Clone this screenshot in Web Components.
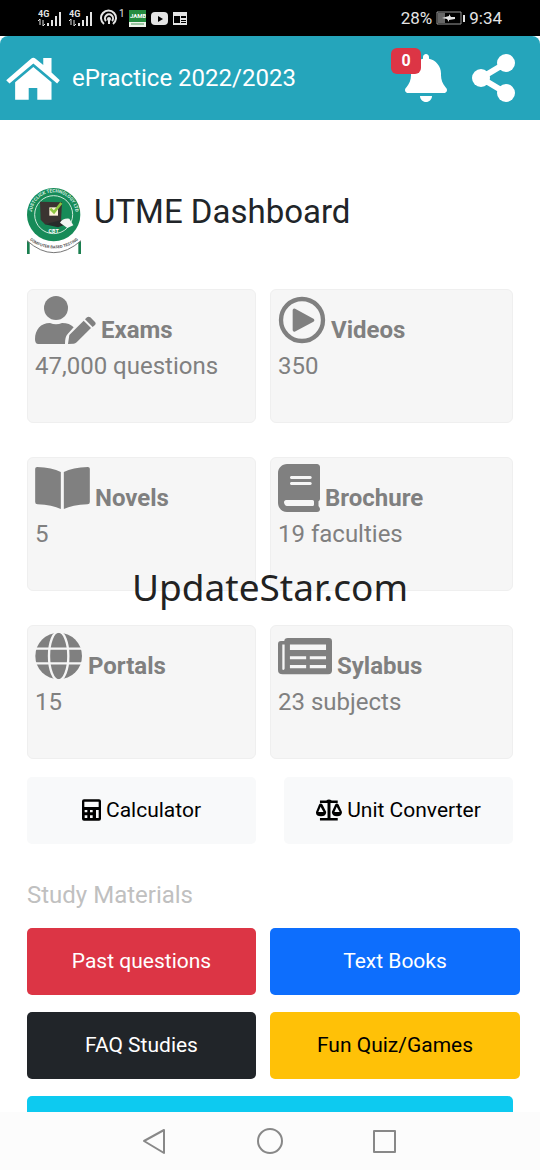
<!DOCTYPE html>
<html lang="en">
<head>
<meta charset="utf-8">
<meta name="viewport" content="width=device-width, initial-scale=1">
<title>UTME Dashboard</title>
<style>
  body {
    margin: 0;
    font-family: Roboto, "Liberation Sans", sans-serif;
    color: #212529;
    background: #fff;
  }
</style>
</head>
<body>
<practice-app></practice-app>

<script>
const icons = {
  home: /* html */`<svg viewBox="18 168 162 130" width="54" height="43"><path d="M18 238 93 173q7-5 14 0l23 19v-21h25v44l25 23-8 10-72-60-72 60zM45 244l55-46 55 46v53h-43v-35H86v35H45z"/></svg>`,
  bell: /* html */`<svg viewBox="0 0 448 512" width="42" height="48"><path d="M224 0c-17.700 0-32 14.300-32 32v19.200C119 66 64 130.600 64 208v18.800c0 47-17.300 92.400-48.500 127.600l-7.400 8.300c-8.400 9.400-10.400 22.900-5.300 34.400S19.400 416 32 416h384c12.600 0 24-7.400 29.200-18.900s3.100-25-5.300-34.400l-7.400-8.300C401.300 319.200 384 273.900 384 226.800V208c0-77.400-55-142-128-156.800V32c0-17.700-14.300-32-32-32zm45.300 493.300c12-12 18.700-28.300 18.700-45.300H160c0 17 6.700 33.300 18.700 45.300s28.300 18.700 45.300 18.700 33.300-6.700 45.300-18.700z"/></svg>`,
  share: /* html */`<svg viewBox="0 0 44 48" width="44" height="48"><path d="M34 9 9 24l25 15" fill="none" stroke="currentColor" stroke-width="6"/><circle cx="34" cy="9" r="9"/><circle cx="9" cy="24" r="9"/><circle cx="34" cy="39" r="9"/></svg>`,
  exams: /* html */`<svg viewBox="58 48 183 144" width="61" height="48"><circle cx="121" cy="84" r="36"/><path d="M58 178c0-29 17-49 45-49q18 8 36 0c16 0 27 4 35 13l-18 20c-6 6-8 16-8 30H68q-10 0-10-14zM157 192l4-27 43-43 22 22-43 43q-4 4-9 4zM208 118l6-6q5-4 10 0l14 14q4 4 0 9l-7 6z"/></svg>`,
  videos: /* html */`<svg viewBox="52 47 144 144" width="48" height="48"><circle cx="124" cy="119" r="63" fill="none" stroke="currentColor" stroke-width="13"/><path d="M101 90v59l55-29z" stroke="currentColor" stroke-width="10" stroke-linejoin="round"/></svg>`,
  novels: /* html */`<svg viewBox="58 42 164 144" width="55" height="48"><path d="M58 56q0-5 6-5 45 1 71 15v111q-25-12-70-14-7 0-7-7zM222 56q0-5-6-5-46 1-72 15v111q25-12 71-14 7 0 7-7z"/></svg>`,
  brochure: /* html */`<svg viewBox="0 0 448 512" width="42" height="48"><path fill-rule="evenodd" d="M96 0C43 0 0 43 0 96v320c0 53 43 96 96 96h320c20 0 32-14 32-30s-10-24-16-34v-50c10-6 16-14 16-30V32c0-17.700-14.300-32-32-32zm0 384h272q16 0 16 16v32q0 16-16 16H96c-17.700 0-32-22-32-40s14.300-24 32-24zm32-240c0-8.800 7.200-16 16-16h192c8.800 0 24 0 24 16s-15 16-24 16H144c-8.800 0-16-7.200-16-16zm16 48h192c8.800 0 24 0 24 16s-15 16-24 16H144c-8.800 0-16-7.200-16-16s7.200-16 16-16z"/></svg>`,
  portals: /* html */`<svg viewBox="60 37 144 144" width="48" height="48"><circle cx="131" cy="109" r="70"/><g fill="none" stroke="#f6f6f6" stroke-width="7"><ellipse cx="131" cy="109" rx="29" ry="73"/><path d="M58 87h146M58 131h146"/></g></svg>`,
  sylabus: /* html */`<svg viewBox="52 36 163 144" width="54" height="48"><path fill-rule="evenodd" d="M82 54h123q10 0 10 10v88q0 11-11 11H66q-14 0-14-13V72q0-9 9-9h10q0-9 11-9zM65 73v76q6 3 7-3V73zM88 73v17h109V73zM88 109v9h49v-9zM148 109v9h49v-9zM88 135v10h49v-10zM148 135v10h49v-10z"/></svg>`,
  calculator: /* html */`<svg viewBox="36 40 57 66" width="19" height="22"><path fill-rule="evenodd" d="M42 41h45q6 0 6 6v52q0 6-6 6H42q-6 0-6-6V47q0-6 6-6zM43 48v16h43V48zM44 73v7h8v-7zM60 73v7h8v-7zM78 73v24h8V73zM44 89v8h8v-8zM60 89v8h8v-8z"/></svg>`,
  scale: /* html */`<svg viewBox="737 39 79 66" width="26" height="22"><path d="M749 43h19q8-6 17 0h18v8h-22v45h22v8h-54v-8h23V51h-23z"/><path fill-rule="evenodd" d="M751 52q4 0 6 4l11 22q0 13-16 13t-15-13l9-22q2-4 5-4zM751 62l-7 16h16zM800 52q4 0 6 4l10 22q0 13-15 13t-16-13l10-22q2-4 5-4zM800 62l-7 16h16z"/></svg>`,
  logo: /* html */`<svg viewBox="81 54 165 201" width="55" height="67" font-family="Roboto, sans-serif" font-weight="700" text-anchor="middle">
    <defs>
      <path id="top" d="M95 133a66 66 0 0 1 132 0"/>
      <path id="base" d="M78 200a118 118 0 0 0 168 0"/>
    </defs>
    <path d="M81 204h8v48h-8zM235 204h8v48h-8z" fill="#1b7f50"/>
    <path d="M81 180q80 70 162 0v32q-80 72-162 0z" fill="#fff"/>
    <path d="M81 212q80 72 162 0" fill="none" stroke="#777" stroke-width="3"/>
    <circle cx="161" cy="134" r="80" fill="#168b58"/>
    <circle cx="161" cy="134" r="57" fill="none" stroke="#cfe9db" stroke-width="3"/>
    <path d="M120 95l66 2-3 56-48 10-13-14z" fill="#3b3431"/>
    <path d="M134 163l50-13 30 8-40 14z" fill="#282c2a"/>
    <path d="M180 158q8-14 28-12l12 20-18 8z" fill="#f2f6f3"/>
    <path d="M148 112h26v25h-26z" fill="#fff4dc"/>
    <path d="M151 116l11 11 22-28" fill="none" stroke="#8cc63f" stroke-width="8"/>
    <text font-size="16" fill="#fff" x="161" y="190">CBT</text>
    <text font-size="14" fill="#d9efe3"><textPath href="#top" startOffset="50%">JUSTCLICK TECHNOLOGY LTD</textPath></text>
    <text font-size="12" fill="#555"><textPath href="#base" startOffset="50%">COMPUTER BASED TESTING</textPath></text>
  </svg>`,
};

const reset = /* css */`
  * { box-sizing: border-box; }
  svg { display: block; flex: none; fill: currentColor; }
  button { margin: 0; padding: 0; border: 0; background: none; color: inherit; font: inherit; cursor: pointer; }
`;

class BaseElement extends HTMLElement {
  connectedCallback() {
    if (!this.shadowRoot) this.attachShadow({ mode: "open" });
    this.shadowRoot.innerHTML = `<style>${reset}${this.constructor.styles}</style>${this.render()}`;
  }
}

class StatusBar extends BaseElement {
  static get styles() {
    return /* css */`
      :host {
        display: flex;
        flex: none;
        justify-content: space-between;
        align-items: center;
        height: 36px;
        padding: 0 38px;
        background: #000;
        color: #e4e4e4;
        font-size: 17px;
      }
      div { display: flex; align-items: center; gap: 4px; }
      .left { gap: 5px; }
    `;
  }

  signal() {
    return /* html */`<svg viewBox="0 0 26 17" width="26" height="17">
      <text x="0" y="7" font-size="9" font-weight="700">4G</text>
      <path d="M2 15V9M5 10v6M0 11l2-2M7 14l-2 2" stroke="currentColor"/>
      <path d="M9 13h2v3H9zM13 10h2v6h-2zM17 6h2v10h-2zM21 2h2v14h-2z"/>
    </svg>`;
  }

  render() {
    return /* html */`
      <div class="left">
        ${this.signal()}${this.signal()}
        <svg viewBox="0 0 24 18" width="24" height="18">
          <g fill="none" stroke="currentColor" stroke-width="2"><path d="M4 15a7.500 7.500 0 1 1 9 0M6 12a4 4 0 1 1 6 0"/></g>
          <circle cx="9" cy="10" r="2"/><path d="M8 10h2v5H8z"/><text x="19" y="8" font-size="10">1</text>
        </svg>
        <svg viewBox="0 0 17 17" width="17" height="17"><path d="M0 0h17v12H0z" fill="#258c40"/><path d="M0 12h17v5H0z" fill="#eef5ec"/><path d="M2 14h13" stroke="#4d9a5c"/><text x="1" y="8" font-size="6" font-weight="700" fill="#fff">JAMB</text></svg>
        <svg viewBox="0 0 17 13" width="17" height="13"><rect width="17" height="13" rx="4"/><path d="M7 4v6l5-3z" fill="#000"/></svg>
        <svg viewBox="0 0 14 13" width="14" height="13"><path fill-rule="evenodd" d="M0 0h14v13H0zM1 4v7h6V4zM8 4v2h5V4zM8 8v1h5V8zM8 10v1h5v-1z"/></svg>
      </div>
      <div>
        <span>28%</span>
        <svg viewBox="0 0 29 15" width="29" height="15"><path d="M1 1h24v12H1z" fill="none" stroke="#999"/><path d="M2 2h7v10H2z" fill="#666"/><path d="M6 7l7-2v-2l2 3h4v2l-6 1v2l-2-3z"/><path d="M27 4h2v7h-2z"/></svg>
        <span>9:34</span>
      </div>`;
  }
}

class AppHeader extends BaseElement {
  static get styles() {
    return /* css */`
      :host {
        display: flex;
        flex: none;
        align-items: center;
        height: 84px;
        padding: 0 24px 0 6px;
        border-radius: 8px 8px 0 0;
        background: #25a5bb;
        color: #fff;
      }
      a { display: block; color: inherit; }
      .title { flex: 1; margin-left: 12px; font-size: 24px; line-height: 28px; }
      .actions { display: flex; gap: 25px; }
      .alerts { position: relative; }
      .badge {
        position: absolute;
        top: -6px;
        left: -14px;
        width: 30px;
        border-radius: 6px;
        background: #dc3545;
        font-size: 16px;
        font-weight: 700;
        line-height: 26px;
        text-align: center;
      }
    `;
  }

  render() {
    return /* html */`
      <a href="#home" aria-label="Home">${icons.home}</a>
      <span class="title"><slot></slot></span>
      <div class="actions">
        <button class="alerts" aria-label="Notifications">${icons.bell}<span class="badge">${this.getAttribute("alerts")}</span></button>
        <button aria-label="Share">${icons.share}</button>
      </div>`;
  }
}

class DashCard extends BaseElement {
  static get styles() {
    return /* css */`
      :host {
        display: block;
        box-sizing: border-box;
        min-height: 134px;
        padding: 6px 7px;
        border: 1px solid #efefef;
        border-radius: 6px;
        background: #f6f6f6;
        color: #808080;
        font-size: 24px;
      }
      a { display: block; color: inherit; text-decoration: none; }
      h2 { display: flex; align-items: flex-end; gap: 5px; margin: 0; font-size: 24px; font-weight: 700; line-height: 28px; }
      p { margin: 4px 0 0; line-height: 36px; }
    `;
  }

  render() {
    const name = this.getAttribute("name");
    return /* html */`<a href="#${name.toLowerCase()}"><h2>${icons[name.toLowerCase()]}<span>${name}</span></h2><p><slot></slot></p></a>`;
  }
}

class AppButton extends BaseElement {
  static get styles() {
    return /* css */`
      :host { display: block; --bg: #f8f9fa; --fg: #000; }
      :host([kind="danger"]) { --bg: #dc3545; --fg: #fff; }
      :host([kind="primary"]) { --bg: #0d6efd; --fg: #fff; }
      :host([kind="dark"]) { --bg: #212529; --fg: #fff; }
      :host([kind="warning"]) { --bg: #ffc107; }
      :host([kind="info"]) { --bg: #0dcaf0; }
      button {
        display: flex;
        align-items: center;
        justify-content: center;
        gap: 5px;
        width: 100%;
        height: 67px;
        padding-bottom: 2px;
        border-radius: 5px;
        background: var(--bg);
        color: var(--fg);
        font-size: 21px;
      }
    `;
  }

  render() {
    const label = this.getAttribute("label");
    return /* html */`<button${label ? ` aria-label="${label}"` : ""}>${icons[this.getAttribute("icon")] ?? ""}<slot></slot></button>`;
  }
}

class NavBar extends BaseElement {
  static get styles() {
    return /* css */`
      :host {
        display: flex;
        flex: none;
        align-items: center;
        justify-content: center;
        gap: 89px;
        height: 58px;
        background: #fcfcfc;
        color: #888;
      }
      svg { fill: none; stroke: currentColor; stroke-width: 2; stroke-linejoin: round; }
    `;
  }

  render() {
    return /* html */`
      <button aria-label="Back"><svg viewBox="0 0 26 26" width="26" height="26"><path d="M22 2v23L2 13z"/></svg></button>
      <button aria-label="Home"><svg viewBox="0 0 26 26" width="26" height="26"><circle cx="13" cy="13" r="12"/></svg></button>
      <button aria-label="Recent apps"><svg viewBox="0 0 26 26" width="26" height="26"><path d="M2 3h21v21H2z"/></svg></button>`;
  }
}

class PracticeApp extends BaseElement {
  static get styles() {
    return /* css */`
      :host { display: flex; flex-direction: column; position: relative; height: 100vh; overflow: hidden; }
      main { flex: 1; min-height: 0; overflow: hidden; padding: 68px 27px 0; }
      .heading { display: flex; gap: 12px; }
      h1 { margin: 0; font-size: 33px; font-weight: 400; line-height: 48px; }
      .cards { display: grid; grid-template-columns: 229fr 243fr; gap: 34px 14px; margin-top: 34px; }
      .tools { display: grid; grid-template-columns: 1fr 1fr; gap: 28px; margin-top: 18px; }
      h3 { margin: 34px 0 16px; color: #c0c0c0; font-size: 24px; font-weight: 400; line-height: 34px; }
      .study { display: grid; grid-template-columns: 229fr 250fr; gap: 17px 14px; margin: 0 -7px 17px 0; }
      .watermark {
        position: absolute;
        inset: 0;
        display: flex;
        align-items: center;
        justify-content: center;
        padding-top: 4px;
        color: #222;
        font: 37px/54px "Noto Sans", "Open Sans", sans-serif;
        pointer-events: none;
      }
    `;
  }

  render() {
    return /* html */`
      <status-bar></status-bar>
      <app-header alerts="0">ePractice 2022/2023</app-header>
      <main>
        <div class="heading">${icons.logo}<h1>UTME Dashboard</h1></div>
        <div class="cards">
          <dash-card name="Exams">47,000 questions</dash-card>
          <dash-card name="Videos">350</dash-card>
          <dash-card name="Novels">5</dash-card>
          <dash-card name="Brochure">19 faculties</dash-card>
          <dash-card name="Portals">15</dash-card>
          <dash-card name="Sylabus">23 subjects</dash-card>
        </div>
        <div class="tools">
          <app-button icon="calculator">Calculator</app-button>
          <app-button icon="scale">Unit Converter</app-button>
        </div>
        <h3>Study Materials</h3>
        <div class="study">
          <app-button kind="danger">Past questions</app-button>
          <app-button kind="primary">Text Books</app-button>
          <app-button kind="dark">FAQ Studies</app-button>
          <app-button kind="warning">Fun Quiz/Games</app-button>
        </div>
        <app-button kind="info" label="More study materials"></app-button>
      </main>
      <nav-bar></nav-bar>
      <div class="watermark">UpdateStar.com</div>`;
  }
}

customElements.define("status-bar", StatusBar);
customElements.define("app-header", AppHeader);
customElements.define("dash-card", DashCard);
customElements.define("app-button", AppButton);
customElements.define("nav-bar", NavBar);
customElements.define("practice-app", PracticeApp);
</script>
</body>
</html>
